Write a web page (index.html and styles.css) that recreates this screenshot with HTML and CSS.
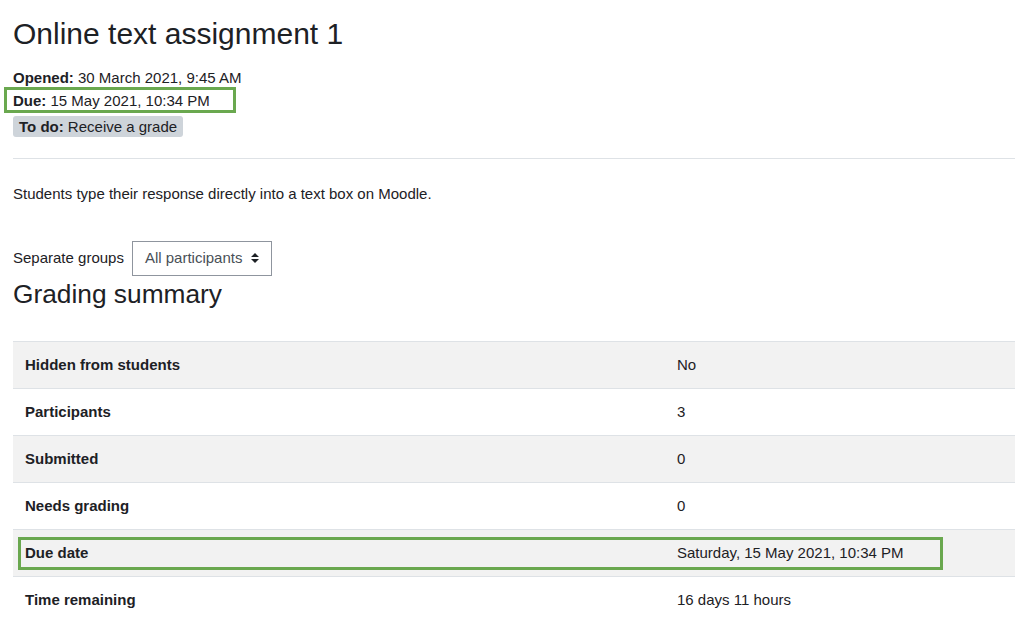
FILE: index.html
```html
<!DOCTYPE html>
<html>
<head>
<meta charset="utf-8">
<link rel="stylesheet" href="styles.css">
</head>
<body>
<div class="page">
  <h2 class="title">Online text assignment 1</h2>
  <div class="dates">
    <div class="date-line"><strong>Opened:</strong> 30 March 2021, 9:45 AM</div>
    <div class="date-line highlight-wrap"><span class="highlight hl-due"></span><strong>Due:</strong> 15 May 2021, 10:34 PM</div>
  </div>
  <div class="todo"><strong>To do:</strong> Receive a grade</div>
  <hr class="divider">
  <p class="intro">Students type their response directly into a text box on Moodle.</p>
  <div class="groups">
    <label class="groups-label">Separate groups</label>
    <div class="select">All participants
      <svg class="caret" width="8" height="12" viewBox="0 0 8 12"><path d="M0 5 L4 1 L8 5 Z M0 7 L4 11 L8 7 Z" fill="#1d2125"/></svg>
    </div>
  </div>
  <h3 class="subtitle">Grading summary</h3>
  <table class="summary">
    <tr><th>Hidden from students</th><td>No</td></tr>
    <tr><th>Participants</th><td>3</td></tr>
    <tr><th>Submitted</th><td>0</td></tr>
    <tr><th>Needs grading</th><td>0</td></tr>
    <tr class="due-row"><th><span class="highlight hl-row"></span>Due date</th><td>Saturday, 15 May 2021, 10:34 PM</td></tr>
    <tr><th>Time remaining</th><td>16 days 11 hours</td></tr>
  </table>
</div>
</body>
</html>
```
FILE: styles.css
```css
html, body {
  margin: 0;
  padding: 0;
  background: #fff;
}
body {
  font-family: "Liberation Sans", Arial, sans-serif;
  font-size: 15px;
  line-height: 1.5;
  color: #1d2125;
  overflow: hidden;
}
.page {
  padding: 0 0 0 13px;
}
.title {
  font-size: 30px;
  font-weight: 400;
  line-height: 1.2;
  margin: 0;
  padding-top: 16px;
  margin-bottom: 14px;
}
.dates {
  line-height: 23px;
}
.date-line strong { font-weight: 700; }
.highlight-wrap { position: relative; }
.highlight {
  position: absolute;
  border: 3px solid #6aa84f;
  box-sizing: border-box;
  pointer-events: none;
}
.hl-due {
  left: -9px;
  top: -2px;
  width: 232px;
  height: 26px;
}
.todo {
  display: inline-block;
  background: #ced4da;
  border-radius: 3px;
  padding: 0 6px;
  line-height: 21px;
  margin-top: 4px;
}
.divider {
  border: 0;
  border-top: 1px solid #dee2e6;
  margin: 19px 0 0 0;
}
.intro {
  margin: 24px 0 0 0;
  line-height: 22px;
}
.groups {
  display: flex;
  align-items: center;
  margin-top: 36px;
  gap: 8px;
}
.select {
  display: flex;
  align-items: center;
  gap: 9px;
  border: 1px solid #8f959e;
  height: 35px;
  box-sizing: border-box;
  padding: 0 12px 0 12px;
  color: #495057;
}
.caret { display: block; }
.subtitle {
  font-size: 26.3px;
  font-weight: 400;
  line-height: 1.2;
  margin: 3px 0 0 0;
}
.summary {
  border-collapse: collapse;
  width: 100%;
  margin-top: 31px;
}
.summary th, .summary td {
  text-align: left;
  padding: 12px;
  border-top: 1px solid #dee2e6;
  line-height: 22px;
  vertical-align: top;
}
.summary th {
  width: 628px;
  font-weight: 700;
  position: relative;
}
.summary tr:nth-child(odd) { background: #f2f2f2; }
.hl-row {
  left: 5px;
  top: 7px;
  width: 925px;
  height: 33px;
}
```
